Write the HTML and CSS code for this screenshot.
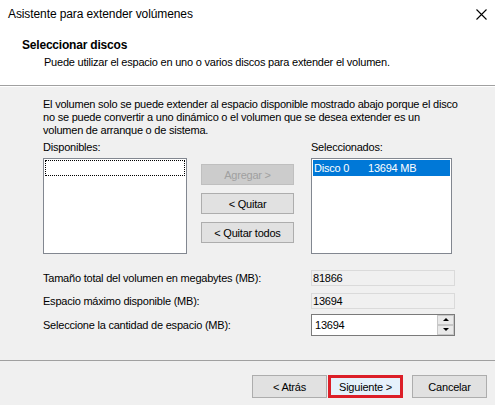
FILE: index.html
```html
<!DOCTYPE html>
<html lang="es">
<head>
  <meta charset="UTF-8">
  <meta name="viewport" content="width=device-width, initial-scale=1.0">
  <title>Asistente para extender volúmenes</title>
  <link rel="stylesheet" href="styles.css">
</head>
<body>
  <div class="window">
    <div class="titlebar">
      <span>Asistente para extender volúmenes</span>
      <svg class="close" width="11" height="11" viewBox="0 0 11 11">
        <path d="M0.5 0.5 L10.5 10.5 M10.5 0.5 L0.5 10.5" stroke="#000" stroke-width="1.1" fill="none"/>
      </svg>
    </div>

    <div class="header">
      <h1>Seleccionar discos</h1>
      <p>Puede utilizar el espacio en uno o varios discos para extender el volumen.</p>
    </div>

    <div class="content">
      <p class="intro">El volumen solo se puede extender al espacio disponible mostrado abajo porque el disco<br>
        no se puede convertir a uno dinámico o el volumen que se desea extender es un<br>
        volumen de arranque o de sistema.</p>

      <div class="picker">
        <label>Disponibles:</label>
        <span></span>
        <label>Seleccionados:</label>

        <div class="listbox">
          <div class="item focus"></div>
        </div>
        <div class="actions">
          <button class="btn" disabled>Agregar &gt;</button>
          <button class="btn">&lt; Quitar</button>
          <button class="btn">&lt; Quitar todos</button>
        </div>
        <div class="listbox">
          <div class="item selected"><span class="disk">Disco 0</span><span>13694 MB</span></div>
        </div>
      </div>

      <div class="fields">
        <div class="row">
          <span class="label">Tamaño total del volumen en megabytes (MB):</span>
          <div class="field readonly">81866</div>
        </div>
        <div class="row second">
          <span class="label">Espacio máximo disponible (MB):</span>
          <div class="field readonly">13694</div>
        </div>
        <div class="row third">
          <span class="label">Seleccione la cantidad de espacio (MB):</span>
          <div class="spinner">
            <span class="value">13694</span>
            <div class="spin">
              <div class="arrow up"></div>
              <div class="arrow down"></div>
            </div>
          </div>
        </div>
      </div>
    </div>

    <div class="footer">
      <button class="btn wide">&lt; Atrás</button>
      <button class="btn wide primary">Siguiente &gt;</button>
      <button class="btn wide cancel">Cancelar</button>
    </div>
  </div>
</body>
</html>
```

FILE: styles.css
```css
body {
  margin: 0;
  font-family: "Liberation Sans", Arial, sans-serif;
  font-size: 11px;
  letter-spacing: -0.22px;
  color: #000;
  background-color: #f0f0f0;
}

.window {
  display: flex;
  flex-direction: column;
  width: 495px;
  height: 405px;
  background-color: #f0f0f0;
}

.titlebar {
  display: flex;
  justify-content: space-between;
  align-items: center;
  height: 28px;
  padding: 0 8px 0 8px;
  font-size: 12px;
  letter-spacing: -0.1px;
  background-color: #fff;
}

.header {
  height: 58px;
  box-sizing: border-box;
  padding: 10px 0 0 22px;
  background-color: #fff;
  border-bottom: 1px solid #a0a0a0;
}

.header h1 {
  margin: 0;
  font-size: 12px;
  line-height: 15px;
  font-weight: bold;
  letter-spacing: -0.2px;
}

.header p {
  margin: 2px 0 0 22px;
  line-height: 14px;
}

.content {
  padding: 0 0 0 43px;
  border-top: 1px solid #fff;
}

.intro {
  margin: 11px 0 0 0;
  line-height: 13px;
}

.picker {
  display: grid;
  grid-template-columns: 144px 93px 144px;
  grid-template-rows: auto 96px;
  column-gap: 14px;
  margin-top: 4px;
}

.picker label:last-of-type {
  grid-column: 3;
  margin-left: 3px;
}

.picker label {
  line-height: 13px;
  margin-bottom: 4px;
}

.picker > span {
  display: block;
}

.listbox {
  background-color: #fff;
  border: 1px solid #828790;
  padding: 1px;
}

.listbox:last-child {
  margin-left: 3px;
}

.item {
  height: 16px;
  line-height: 16px;
  box-sizing: border-box;
}

.item.focus {
  border: 1px dotted #000;
}

.item.selected {
  background-color: #0078d7;
  color: #fff;
  padding-left: 1px;
}

.item .disk {
  display: inline-block;
  width: 54px;
}

.actions {
  display: flex;
  flex-direction: column;
  gap: 8px;
  padding-top: 6px;
}

.btn {
  font-family: inherit;
  font-size: 11px;
  letter-spacing: inherit;
  height: 21px;
  padding: 0;
  color: #000;
  background-color: #e1e1e1;
  border: 1px solid #adadad;
}

.btn:disabled {
  color: #a0a0a0;
  background-color: #cccccc;
  border-color: #bfbfbf;
}

.fields {
  margin-top: 16px;
}

.row {
  display: flex;
  align-items: center;
}

.row.second {
  margin-top: 7px;
}

.row.third {
  margin-top: 5px;
}

.label {
  width: 268px;
}

.field {
  width: 144px;
  height: 16px;
  box-sizing: border-box;
  line-height: 14px;
  padding-left: 1px;
}

.field.readonly {
  background-color: #f0f0f0;
  border: 1px solid #dadada;
}

.spinner {
  display: flex;
  justify-content: space-between;
  width: 144px;
  height: 22px;
  box-sizing: border-box;
  background-color: #fff;
  border: 1px solid #7a7a7a;
}

.spinner .value {
  line-height: 20px;
  padding-left: 3px;
}

.spin {
  display: flex;
  flex-direction: column;
  width: 17px;
}

.arrow {
  flex: 1;
  position: relative;
  background-color: #e9e9e9;
  border: 1px solid #c7c7c7;
}

.arrow::after {
  content: "";
  position: absolute;
  left: 5px;
  top: 2px;
  border-left: 3px solid transparent;
  border-right: 3px solid transparent;
}

.arrow.up::after {
  border-bottom: 3px solid #000;
}

.arrow.down::after {
  border-top: 3px solid #000;
}

.footer {
  display: flex;
  justify-content: flex-end;
  margin-top: auto;
  height: 45px;
  box-sizing: border-box;
  padding: 14px 8px 0 0;
  border-top: 1px solid #a0a0a0;
}

.btn.wide {
  width: 75px;
  height: 23px;
}

.btn.primary {
  margin-left: 1px;
  background-color: #e5f1fb;
  border: 3px solid #dc1f28;
}

.btn.cancel {
  margin-left: 9px;
}
```
